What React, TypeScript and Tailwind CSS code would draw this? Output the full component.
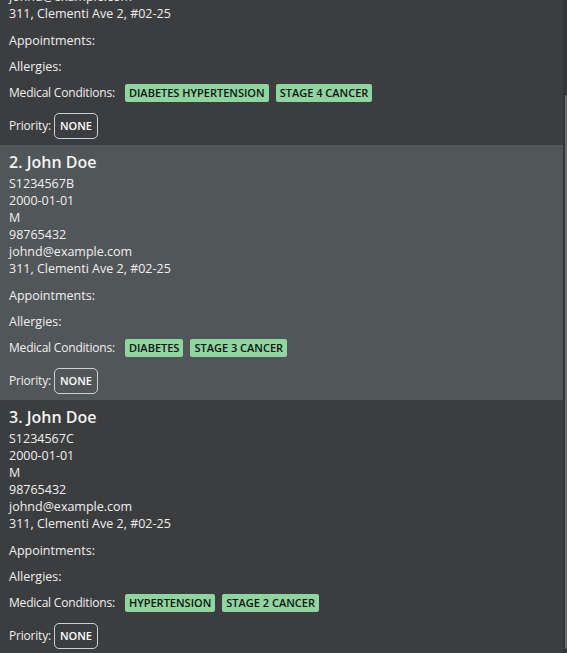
const FONT = { fontFamily: '"Open Sans", "Noto Sans", sans-serif' };

interface Person {
  index: number;
  nric: string;
  conditions: string[];
  selected?: boolean;
}

const PEOPLE: Person[] = [
  { index: 1, nric: "S1234567A", conditions: ["DIABETES HYPERTENSION", "STAGE 4 CANCER"] },
  { index: 2, nric: "S1234567B", conditions: ["DIABETES", "STAGE 3 CANCER"], selected: true },
  { index: 3, nric: "S1234567C", conditions: ["HYPERTENSION", "STAGE 2 CANCER"] },
];

function PersonCard({ person }: { person: Person }) {
  return (
    <div className={`h-[255px] pl-[9px] pt-[7px] text-[#f0f0f0] ${person.selected ? "bg-[#515658]" : "bg-[#3c3d3f]"}`}>
      <div className="h-[21px] text-[16px] leading-[21px] font-semibold text-[#f4f4f4]">
        {person.index}. John Doe
      </div>
      <div className="mt-[2px] text-[12.5px] leading-[17px]">
        <div>{person.nric}</div>
        <div>2000-01-01</div>
        <div>M</div>
        <div>98765432</div>
        <div>johnd@example.com</div>
        <div>311, Clementi Ave 2, #02-25</div>
      </div>
      <div className="mt-[6px] text-[12.5px]">
        <div className="h-[26px] flex items-center">Appointments:</div>
        <div className="h-[26px] flex items-center">Allergies:</div>
        <div className="h-[26px] flex items-center gap-[7px]">
          <span className="mr-[3px] text-[12px] tracking-[-0.2px]">Medical Conditions:</span>
          {person.conditions.map((c) => (
            <span key={c} className="bg-[#8fd59f] text-[#111] text-[11px] font-semibold leading-[18px] px-[4px] rounded-[2px]">
              {c}
            </span>
          ))}
        </div>
        <div className="pt-[7px] flex items-center gap-[3px]">
          <span className="text-[12px] tracking-[-0.2px]">Priority:</span>
          <span className="h-[26px] px-[5px] flex items-center border-[1.5px] border-[#d0d0d0] rounded-[5px] text-[11px] font-semibold text-white">
            NONE
          </span>
        </div>
      </div>
    </div>
  );
}

export default function App() {
  return (
    <div className="w-[567px] h-[653px] overflow-hidden flex bg-[#3c3d3f]" style={FONT}>
      <div className="flex-1 mt-[-110px]">
        {PEOPLE.map((p) => (
          <PersonCard key={p.index} person={p} />
        ))}
      </div>
      {/* scrollbar */}
      <div className="w-[4px] bg-[#353637] flex flex-col">
        <div className="h-[95px]" />
        <div className="h-[554px] ml-[2px] bg-[#6a6c6e] rounded-[1px]" />
      </div>
    </div>
  );
}
